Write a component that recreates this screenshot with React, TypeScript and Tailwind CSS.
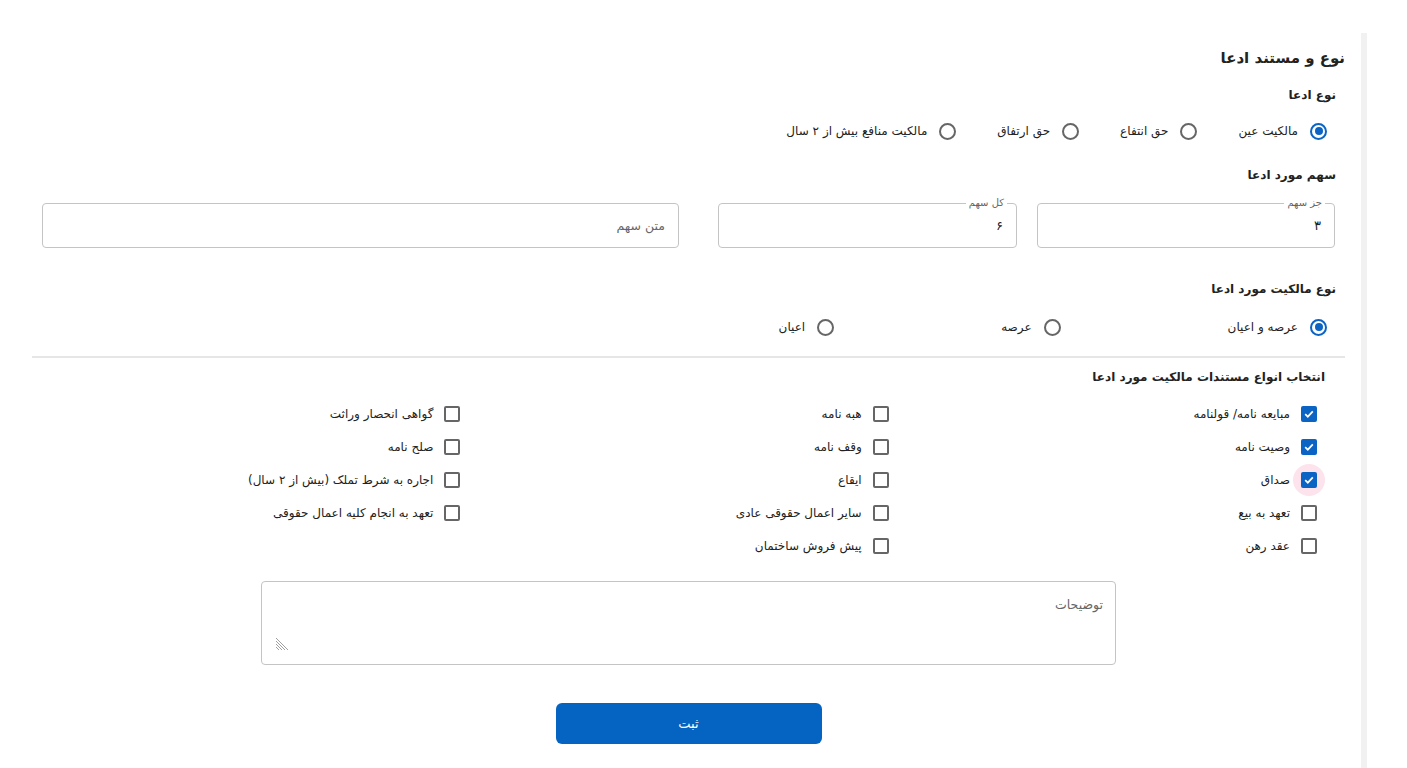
import React from "react";

const font = { fontFamily: '"DejaVu Sans", "Noto Sans", sans-serif' };

function Radio({ label, checked }: { label: string; checked?: boolean }) {
  return (
    <div className="flex items-center gap-[12px] h-[20px]">
      <span
        className={
          "w-[17px] h-[17px] rounded-full border-2 flex items-center justify-center shrink-0 " +
          (checked ? "border-[#0b63c4]" : "border-[#666666]")
        }
      >
        {checked && <span className="w-[8px] h-[8px] rounded-full bg-[#0b63c4]" />}
      </span>
      <span className="text-[12px] text-[#222] whitespace-nowrap">{label}</span>
    </div>
  );
}

function Check({ label, checked, focus }: { label: string; checked?: boolean; focus?: boolean }) {
  return (
    <div className="flex items-center gap-[11px] h-[33px]">
      <span className="relative w-[16px] h-[16px] shrink-0">
        {focus && (
          <span className="absolute left-[-8px] top-[-8px] w-[32px] h-[32px] rounded-full bg-[#fde4ec]" />
        )}
        {checked ? (
          <span className="absolute inset-0 rounded-[2px] bg-[#0b63c4] flex items-center justify-center">
            <svg width="12" height="12" viewBox="0 0 12 12">
              <path d="M2.2 6.2 L4.8 8.7 L9.8 3.4" stroke="white" strokeWidth="1.7" fill="none" />
            </svg>
          </span>
        ) : (
          <span className="absolute inset-0 rounded-[2px] border-2 border-[#666666] bg-white" />
        )}
      </span>
      <span className="text-[12px] text-[#222] whitespace-nowrap">{label}</span>
    </div>
  );
}

function Field({ label, value, placeholder, width }: { label?: string; value?: string; placeholder?: string; width: string }) {
  return (
    <div className={"relative h-[45px] shrink-0 rounded-[4px] border border-[#c4c4c4] " + width}>
      {label && (
        <span className="absolute top-[-7px] right-[9px] px-[3px] bg-white text-[10px] leading-[12px] text-[#666]">
          {label}
        </span>
      )}
      <div className="h-full flex items-center pr-[13px] pt-[1px]">
        {value ? (
          <span className="text-[13px] text-[#222]">{value}</span>
        ) : (
          <span className="text-[12.5px] text-[#666]">{placeholder}</span>
        )}
      </div>
    </div>
  );
}

export default function App() {
  const col1: [string, boolean, boolean][] = [
    ["مبایعه نامه/ قولنامه", true, false],
    ["وصیت نامه", true, false],
    ["صداق", true, true],
    ["تعهد به بیع", false, false],
    ["عقد رهن", false, false],
  ];
  const col2 = ["هبه نامه", "وقف نامه", "ایقاع", "سایر اعمال حقوقی عادی", "پیش فروش ساختمان"];
  const col3 = ["گواهی انحصار وراثت", "صلح نامه", "اجاره به شرط تملک (بیش از ۲ سال)", "تعهد به انجام کلیه اعمال حقوقی"];

  return (
    <div className="w-[1407px] h-[768px] bg-white flex overflow-hidden" style={font}>
      <div dir="rtl" className="w-[1361px] shrink-0 pl-[32px] pr-[16px] pt-[46px] flex flex-col">
        <div className="h-[24px] flex items-center text-[15px] font-bold text-[#222]">نوع و مستند ادعا</div>

        <div className="mt-[15px] pr-[9px] h-[20px] flex items-center text-[12px] font-bold text-[#222]">نوع ادعا</div>

        <div className="mt-[16px] pr-[18px] flex items-center gap-[41px]">
          <Radio label="مالکیت عین" checked />
          <Radio label="حق انتفاع" />
          <Radio label="حق ارتفاق" />
          <Radio label="مالکیت منافع بیش از ۲ سال" />
        </div>

        <div className="mt-[24px] pr-[9px] h-[20px] flex items-center text-[12px] font-bold text-[#222]">سهم مورد ادعا</div>

        <div className="mt-[18px] pr-[10px] pl-[10px] flex">
          <Field label="جز سهم" value="۳" width="w-[298px]" />
          <div className="w-[20px] shrink-0" />
          <Field label="کل سهم" value="۶" width="w-[299px]" />
          <div className="w-[39px] shrink-0" />
          <Field placeholder="متن سهم" width="w-[637px]" />
        </div>

        <div className="mt-[31px] pr-[9px] h-[20px] flex items-center text-[12px] font-bold text-[#222]">نوع مالکیت مورد ادعا</div>

        <div className="mt-[18px] pr-[18px] flex items-center gap-[167px]">
          <Radio label="عرصه و اعیان" checked />
          <Radio label="عرصه" />
          <Radio label="اعیان" />
        </div>

        <div className="mt-[19px] border-t-2 border-[#e6e6e6]" />

        <div className="mt-[9px] pr-[20px] h-[20px] flex items-center text-[12px] font-bold text-[#222]">
          انتخاب انواع مستندات مالکیت مورد ادعا
        </div>

        <div className="mt-[10px] pr-[28px] flex">
          <div className="w-[431px] flex flex-col">
            {col1.map(([l, c, f]) => (
              <Check key={l} label={l} checked={c} focus={f} />
            ))}
          </div>
          <div className="w-[431px] flex flex-col">
            {col2.map((l) => (
              <Check key={l} label={l} />
            ))}
          </div>
          <div className="w-[431px] flex flex-col">
            {col3.map((l) => (
              <Check key={l} label={l} />
            ))}
          </div>
        </div>

        <div className="mt-[19px] self-center relative w-[855px] h-[84px] rounded-[4px] border border-[#c4c4c4]">
          <div className="pt-[14px] pr-[12px] text-[12.5px] text-[#666]">توضیحات</div>
          <svg className="absolute left-[13px] bottom-[13px]" width="14" height="14" viewBox="0 0 14 14">
            <path d="M1 1 L13 13 M1 4 L10 13 M1 7 L7 13 M1 10 L4 13" stroke="#888" strokeWidth="0.8" />
          </svg>
        </div>

        <div className="mt-[38px] self-center w-[266px] h-[41px] rounded-[6px] bg-[#0563c1] flex items-center justify-center text-white text-[13px]">
          ثبت
        </div>
      </div>
      <div className="w-[6px] shrink-0 mt-[33px] h-[735px] bg-[#f1f1f1]" />
    </div>
  );
}
